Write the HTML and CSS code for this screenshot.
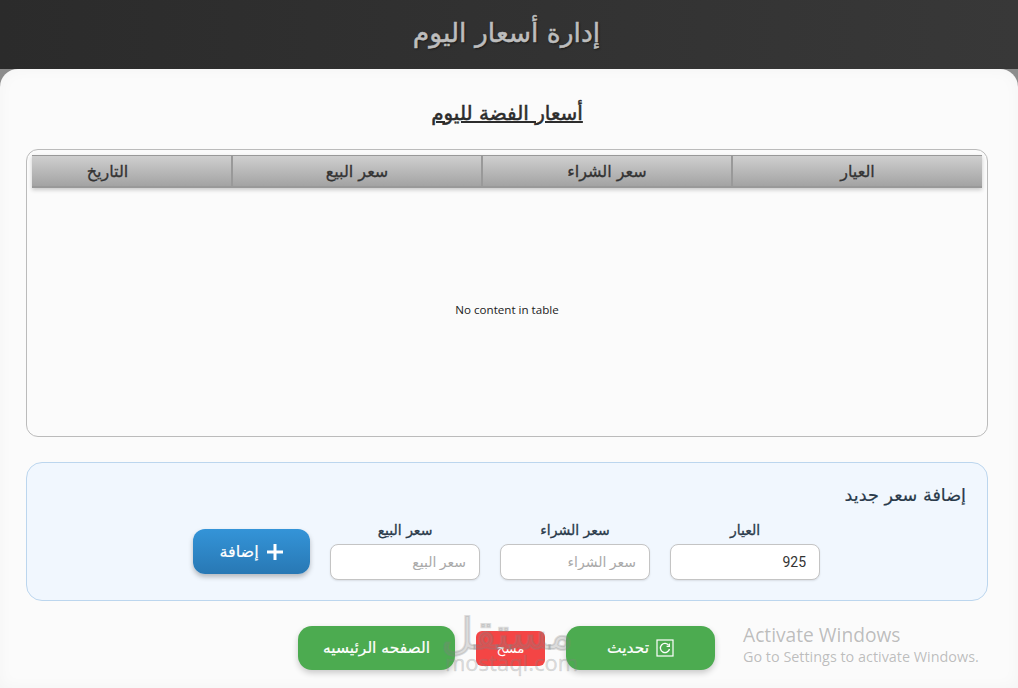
FILE: index.html
```html
<!DOCTYPE html>
<html lang="ar" dir="rtl">

<head>
    <meta charset="UTF-8">
    <title>إدارة أسعار اليوم</title>
    <link rel="stylesheet" href="styles.css">
</head>

<body>
    <div class="header">
        <h1>إدارة أسعار اليوم</h1>
    </div>

    <div class="card">
        <h2 class="page-title">أسعار الفضة لليوم</h2>

        <div class="table-box">
            <div class="table-head">
                <div class="col col-first">العيار</div>
                <div class="col col-wide">سعر الشراء</div>
                <div class="col col-wide">سعر البيع</div>
                <div class="col col-narrow">التاريخ</div>
            </div>
            <div class="table-empty" dir="ltr">No content in table</div>
        </div>

        <div class="form-panel">
            <h3>إضافة سعر جديد</h3>
            <div class="form-row">
                <div class="field">
                    <label>العيار</label>
                    <input type="text" value="925">
                </div>
                <div class="field">
                    <label>سعر الشراء</label>
                    <input type="text" placeholder="سعر الشراء">
                </div>
                <div class="field">
                    <label>سعر البيع</label>
                    <input type="text" placeholder="سعر البيع">
                </div>
                <button class="btn btn-add">
                    <svg width="18" height="16" viewBox="0 0 18 16"><path d="M9 0v16M1 8h16" stroke="#fff" stroke-width="3" fill="none"/></svg>
                    إضافة
                </button>
            </div>
        </div>

        <div class="actions">
            <button class="btn btn-green btn-update">
                <svg width="18" height="18" viewBox="0 0 18 18"><rect x="1" y="1" width="16" height="16" fill="none" stroke="#fff" stroke-width="1.2"/><path d="M12.8 6.4A4.6 4.6 0 1 0 13.5 10" fill="none" stroke="#fff" stroke-width="1.3"/><path d="M13.4 4.6v2.8h-2.8" fill="none" stroke="#fff" stroke-width="1.1"/></svg>
                تحديث
            </button>
            <button class="btn btn-red">مسح</button>
            <button class="btn btn-green btn-home">الصفحه الرئيسيه</button>
        </div>
    </div>

    <div class="watermark">
        <div class="wm-ar">مستقل</div>
        <div class="wm-en" dir="ltr">mostaql.com</div>
    </div>

    <div class="activate" dir="ltr">
        <div class="activate-title">Activate Windows</div>
        <div class="activate-sub">Go to Settings to activate Windows.</div>
    </div>
</body>

</html>
```

FILE: styles.css
```css
body {
    margin: 0;
    height: 688px;
    overflow: hidden;
    position: relative;
    font-family: 'DejaVu Sans', 'Noto Sans', sans-serif;
    background-color: #8c8c8c;
    color: #333;
}

.header {
    height: 69px;
    box-sizing: border-box;
    padding: 0 5px 4px 0;
    display: flex;
    justify-content: center;
    align-items: center;
    background: linear-gradient(to right, #2b2b2b, #383838);
}

.header h1 {
    margin: 0;
    font-size: 26.6px;
    font-weight: normal;
    color: #bdbdbd;
    text-shadow: 1px 1px 2px rgba(0, 0, 0, 0.6);
    -webkit-text-stroke: 0.5px #bdbdbd;
}

.card {
    height: 619px;
    box-sizing: border-box;
    padding: 30px 30px 0 26px;
    background-color: #fbfbfb;
    border-radius: 18px 18px 0 0;
    box-shadow: inset 0 0 16px rgba(0, 0, 0, 0.03);
}

.page-title {
    margin: 0 0 22px;
    height: 28px;
    line-height: 28px;
    text-align: center;
    font-size: 20px;
    font-weight: normal;
    color: #2c2c2c;
    text-decoration: underline;
    -webkit-text-stroke: 0.5px #2c2c2c;
}

.table-box {
    height: 288px;
    box-sizing: border-box;
    padding: 5px;
    border: 1px solid #bbb;
    border-radius: 12px;
    display: flex;
    flex-direction: column;
}

.table-head {
    display: flex;
    height: 33px;
    background: linear-gradient(to bottom, #cfcfcf, #a3a3a3);
    box-shadow: 0 2px 4px rgba(0, 0, 0, 0.2);
    border-top: 1px solid #999;
    border-bottom: 2px solid #999;
    box-sizing: border-box;
}

.col {
    display: flex;
    justify-content: center;
    align-items: center;
    font-size: 16px;
    color: #333;
    border-left: 2px solid #999;
    box-sizing: border-box;
    -webkit-text-stroke: 0.3px #333;
}

.col-first {
    width: 251px;
}

.col-wide {
    width: 250px;
}

.col-narrow {
    width: 199px;
    border-left: none;
    padding-right: 48px;
}

.table-empty {
    flex: 1;
    display: flex;
    justify-content: center;
    align-items: center;
    font-family: 'Open Sans', sans-serif;
    font-size: 11.6px;
    color: #222;
}

.form-panel {
    height: 139px;
    box-sizing: border-box;
    margin-top: 25px;
    padding: 20px 21px 0 21px;
    background-color: #f1f7fe;
    border: 1px solid #bcd6ee;
    border-radius: 16px;
}

.form-panel h3 {
    margin: 0 0 15px;
    font-size: 17.6px;
    line-height: 24px;
    font-weight: normal;
    color: #2a3a4a;
    -webkit-text-stroke: 0.2px #2a3a4a;
}

.form-row {
    display: flex;
    gap: 20px;
    align-items: flex-start;
    padding-right: 146px;
}

.field {
    width: 150px;
    display: flex;
    flex-direction: column;
    align-items: center;
}

.field label {
    font-size: 14px;
    line-height: 16px;
    margin-bottom: 6px;
    color: #2a3a4a;
    -webkit-text-stroke: 0.3px #2a3a4a;
}

.field input {
    width: 100%;
    height: 36px;
    box-sizing: border-box;
    padding: 0 13px;
    font-family: Roboto, 'DejaVu Sans', sans-serif;
    font-size: 14px;
    color: #333;
    background-color: #fff;
    border: 1px solid #c4c4c4;
    border-radius: 8px;
    box-shadow: 0 1px 2px rgba(0, 0, 0, 0.1);
}

.field input::placeholder {
    color: #aaa;
}

.btn {
    border: none;
    color: #fff;
    font-family: inherit;
    font-size: 15.5px;
    display: flex;
    justify-content: center;
    align-items: center;
    gap: 7px;
    cursor: pointer;
}

.btn-add {
    width: 117px;
    height: 45px;
    margin-top: 7px;
    font-size: 16px;
    border-radius: 12px;
    background: linear-gradient(to bottom, #3494d8, #2878b4);
    box-shadow: 0 3px 5px rgba(0, 0, 0, 0.25);
    -webkit-text-stroke: 0.2px #fff;
}

.actions {
    margin-top: 25px;
    display: flex;
    align-items: center;
    gap: 21px;
    padding-right: 273px;
}

.btn-green {
    height: 44px;
    border-radius: 14px;
    background-color: #4cab50;
    box-shadow: 0 3px 6px rgba(0, 0, 0, 0.2);
    -webkit-text-stroke: 0.2px #fff;
}

.btn-update {
    width: 149px;
}

.btn-home {
    width: 157px;
}

.btn-red {
    width: 69px;
    height: 35px;
    border-radius: 6px;
    font-size: 13.5px;
    font-family: 'Noto Sans', 'DejaVu Sans', sans-serif;
    background-color: #f44545;
}

.watermark {
    position: absolute;
    left: 445px;
    top: 610px;
    width: 128px;
    text-align: center;
    color: rgba(130, 130, 130, 0.25);
    pointer-events: none;
}

.wm-ar {
    font-size: 44px;
    line-height: 48px;
    -webkit-text-stroke: 2px rgba(130, 130, 130, 0.25);
}

.wm-en {
    margin-top: -6px;
    font-family: 'Open Sans', sans-serif;
    font-size: 22px;
    line-height: 20px;
    -webkit-text-stroke: 0.5px rgba(130, 130, 130, 0.25);
}

.activate {
    position: absolute;
    left: 743px;
    top: 622px;
    color: rgba(120, 120, 120, 0.48);
    font-family: 'Open Sans', sans-serif;
}

.activate-title {
    font-size: 19.2px;
    line-height: 25px;
}

.activate-sub {
    font-size: 14.4px;
    line-height: 20px;
}
```
